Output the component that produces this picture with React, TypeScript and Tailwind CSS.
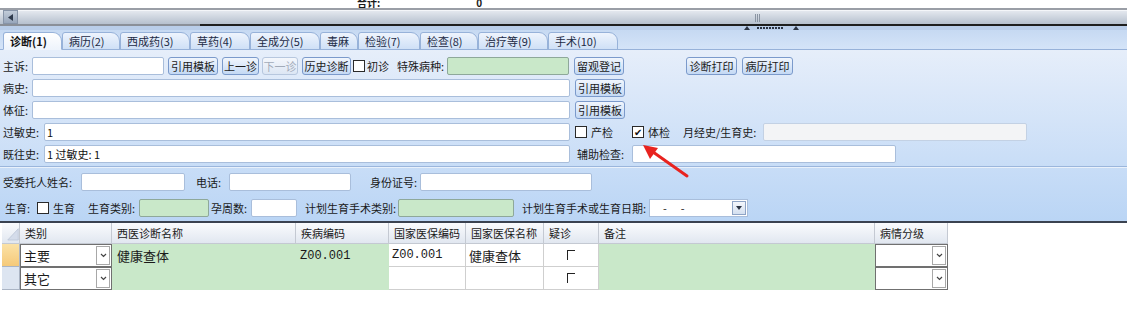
import React from 'react';

const font = "font-['Noto_Sans_CJK_SC','Noto_Sans',sans-serif]";

const Btn = ({ className = '', disabled = false, children }: { className?: string; disabled?: boolean; children: React.ReactNode }) => (
  <div
    className={`h-[18px] shrink-0 flex items-center justify-center rounded-[3px] border text-[11px] leading-none bg-linear-to-b ${
      disabled ? 'border-[#b7c7de] from-[#f4f7fc] to-[#dce6f4] text-[#a2abb9]' : 'border-[#7b9acb] from-[#f1f6fd] to-[#c4d9f4] text-[#1b1b1b]'
    } ${className}`}
  >
    {children}
  </div>
);

const Field = ({ className = '', tone = 'white', children }: { className?: string; tone?: 'white' | 'green' | 'gray'; children?: React.ReactNode }) => {
  const tones = {
    white: 'bg-white border-[#a9bedb]',
    green: 'bg-[#c9e8c9] border-[#8ea89a]',
    gray: 'bg-[#f3f4f6] border-[#c3d1e4]',
  };
  return (
    <div className={`h-[18px] shrink-0 flex items-center border rounded-[2px] pl-[2px] text-[11px] leading-none text-[#111] ${tones[tone]} ${className}`}>
      {children}
    </div>
  );
};

const Label = ({ className = '', children }: { className?: string; children: React.ReactNode }) => (
  <span className={`shrink-0 whitespace-nowrap text-[11px] leading-none text-[#1a1a1a] ${className}`}>{children}</span>
);

const Check = ({ className = '', checked = false }: { className?: string; checked?: boolean }) => (
  <div className={`w-[12px] h-[12px] shrink-0 bg-white border border-[#2a2a2a] flex items-center justify-center text-[10px] leading-none text-[#111] ${className}`}>
    {checked ? '✔' : ''}
  </div>
);

const Combo = ({ className = '', text = '' }: { className?: string; text?: string }) => (
  <div className={`h-full flex bg-white border border-[#707070] ${className}`}>
    <div className="flex-1 flex items-center pl-[3px] text-[13px] leading-none">{text}</div>
    <div className="w-[14px] m-[1px] border border-[#a8a8a8] flex items-center justify-center">
      <svg width="7" height="5" viewBox="0 0 7 5">
        <path d="M1 1 L3.5 3.5 L6 1" fill="none" stroke="#444" strokeWidth="1.2" />
      </svg>
    </div>
  </div>
);

const tabs = [
  { t: '诊断(1)', w: 'w-[59px]' },
  { t: '病历(2)', w: 'w-[58px]' },
  { t: '西成药(3)', w: 'w-[70px]' },
  { t: '草药(4)', w: 'w-[60px]' },
  { t: '全成分(5)', w: 'w-[70px]' },
  { t: '毒麻', w: 'w-[38px]' },
  { t: '检验(7)', w: 'w-[62px]' },
  { t: '检查(8)', w: 'w-[58px]' },
  { t: '治疗等(9)', w: 'w-[70px]' },
  { t: '手术(10)', w: 'w-[70px]' },
];

const HeadCell = ({ className = '', children }: { className?: string; children?: React.ReactNode }) => (
  <div className={`h-[21px] shrink-0 flex items-center pl-[5px] border-r border-b border-[#c4c9d2] text-[11px] leading-none text-[#1a1a1a] bg-linear-to-b from-[#fafbfd] to-[#e1e7f0] ${className}`}>
    {children}
  </div>
);

const GridRow = ({ main, current }: { main: boolean; current: boolean }) => (
  <div className="flex h-[23px]">
    <div className={`w-[18px] shrink-0 border-r border-b border-[#aab4c4] ${current ? 'bg-linear-to-b from-[#fbe2a6] to-[#f5c979]' : 'bg-[#dde5f1]'}`} />
    <div className="w-[92px] shrink-0">
      <Combo text={main ? '主要' : '其它'} />
    </div>
    <div className="w-[184px] shrink-0 bg-[#c9e8c9] flex items-center pl-[5px] text-[13px] leading-none">{main ? '健康查体' : ''}</div>
    <div className="w-[93px] shrink-0 bg-[#c9e8c9] flex items-center pl-[4px] text-[12px] leading-none font-['Liberation_Mono',monospace]">{main ? 'Z00.001' : ''}</div>
    <div className="w-[77px] shrink-0 bg-white border-r border-b border-[#cfcfcf] flex items-center pl-[3px] text-[12px] leading-none font-['Liberation_Mono',monospace]">{main ? 'Z00.001' : ''}</div>
    <div className="w-[78px] shrink-0 bg-white border-r border-b border-[#cfcfcf] flex items-center pl-[3px] text-[13px] leading-none">{main ? '健康查体' : ''}</div>
    <div className="w-[55px] shrink-0 bg-white border-r border-b border-[#cfcfcf] flex items-center pl-[23px]">
      <div className="w-[8px] h-[10px] border-t border-l border-[#222]" />
    </div>
    <div className="w-[276px] shrink-0 bg-[#c9e8c9]" />
    <div className="w-[73px] shrink-0">
      <Combo />
    </div>
  </div>
);

export default function App() {
  return (
    <div className={`relative w-[1127px] h-[334px] overflow-hidden bg-white text-[#1a1a1a] ${font}`}>
      {/* total line, partly scrolled out at the top */}
      <div className="h-[8px] overflow-hidden">
        <div className="-mt-[2px] flex text-[10px] leading-[10px] font-bold">
          <span className="ml-[357px]">合计:</span>
          <span className="ml-[96px]">0</span>
        </div>
      </div>
      <div className="h-[2px] bg-[#9a9ea6]" />
      {/* scrollbar */}
      <div className="h-[14px] flex bg-linear-to-b from-[#e7ebf1] to-[#b6c0ce]">
        <div className="ml-[3px] w-[15px] bg-linear-to-b from-[#c2ccd9] to-[#98a6bb] border border-[#8794a8] flex items-center justify-center">
          <svg width="5" height="7" viewBox="0 0 5 7">
            <path d="M5 0 L0 3.5 L5 7 Z" fill="#2e3a4c" />
          </svg>
        </div>
        <div className="flex-1 border-t border-[#f4f6f9] flex items-center">
          <div className="ml-[737px] flex gap-[1px]">
            <div className="w-[1px] h-[8px] bg-[#8a94a2]" />
            <div className="w-[1px] h-[8px] bg-[#8a94a2]" />
            <div className="w-[1px] h-[8px] bg-[#8a94a2]" />
          </div>
        </div>
      </div>
      <div className="h-[2px] flex">
        <div className="w-[200px] bg-[#8a8f98]" />
        <div className="flex-1 bg-[#1e1e1e]" />
      </div>
      {/* splitter */}
      <div className="h-[4px] bg-[#b9cde9] flex items-center">
        <svg className="ml-[744px]" width="6" height="4" viewBox="0 0 6 4">
          <path d="M0 4 L3 0 L6 4 Z" fill="#2b3444" />
        </svg>
        <div className="ml-[7px] flex gap-[1px]">
          {Array.from({ length: 9 }).map((_, i) => (
            <div key={i} className="w-[2px] h-[2px] bg-[#2b3444]" />
          ))}
        </div>
        <svg className="ml-[10px]" width="6" height="4" viewBox="0 0 6 4">
          <path d="M0 4 L3 0 L6 4 Z" fill="#2b3444" />
        </svg>
      </div>
      {/* tabs */}
      <div className="h-[20px] flex items-end pl-[3px] bg-linear-to-b from-[#c6d9f2] to-[#d4e4f8] border-b border-[#97b2d9]">
        {tabs.map((tab, i) => (
          <div
            key={tab.t}
            className={`shrink-0 ${tab.w} h-[18px] -mb-[1px] flex items-center pl-[6px] rounded-tl-[3px] rounded-tr-[9px] border border-[#97b2d9] text-[11px] leading-none whitespace-nowrap ${
              i === 0 ? 'bg-linear-to-b from-white to-[#eef4fc] border-b-[#eef4fc] font-bold text-[#111]' : 'bg-linear-to-b from-[#eef4fd] to-[#cfe0f6] text-[#1c2a44]'
            }`}
          >
            {tab.t}
          </div>
        ))}
      </div>
      {/* form panel */}
      <div className="h-[171px] pt-[7px] bg-linear-to-b from-[#e6eefa] to-[#bad5f5] flex flex-col">
        <div className="flex flex-col gap-[4px]">
          <div className="flex items-center h-[18px]">
            <Label className="w-[32px] pl-[3px]">主诉:</Label>
            <Field className="w-[132px]" />
            <Btn className="ml-[4px] w-[50px]">引用模板</Btn>
            <Btn className="ml-[4px] w-[37px]">上一诊</Btn>
            <Btn className="ml-[3px] w-[36px]" disabled>下一诊</Btn>
            <Btn className="ml-[4px] w-[49px]">历史诊断</Btn>
            <Check className="ml-[2px]" />
            <Label className="ml-[2px] w-[28px]">初诊</Label>
            <Label className="ml-[2px] w-[50px]">特殊病种:</Label>
            <Field className="w-[122px]" tone="green" />
            <Btn className="ml-[5px] w-[50px]">留观登记</Btn>
            <Btn className="ml-[62px] w-[51px]">诊断打印</Btn>
            <Btn className="ml-[5px] w-[51px]">病历打印</Btn>
          </div>
          <div className="flex items-center h-[18px]">
            <Label className="w-[32px] pl-[3px]">病史:</Label>
            <Field className="w-[538px]" />
            <Btn className="ml-[5px] w-[50px]">引用模板</Btn>
          </div>
          <div className="flex items-center h-[18px]">
            <Label className="w-[32px] pl-[3px]">体征:</Label>
            <Field className="w-[538px]" />
            <Btn className="ml-[5px] w-[50px]">引用模板</Btn>
          </div>
          <div className="flex items-center h-[18px]">
            <Label className="w-[44px] pl-[3px]">过敏史:</Label>
            <Field className="w-[526px]">1</Field>
            <Check className="ml-[5px]" />
            <Label className="ml-[4px] w-[41px]">产检</Label>
            <Check checked />
            <Label className="ml-[4px] w-[35px]">体检</Label>
            <Label className="w-[80px]">月经史/生育史:</Label>
            <Field className="w-[264px]" tone="gray" />
          </div>
          <div className="flex items-center h-[18px]">
            <Label className="w-[44px] pl-[3px]">既往史:</Label>
            <Field className="w-[526px]">1 过敏史: 1</Field>
            <Label className="ml-[7px] w-[55px]">辅助检查:</Label>
            <Field className="w-[264px]" />
          </div>
        </div>
        <div className="mt-[3px] h-[1px] bg-[#9bb6dc]" />
        <div className="h-[1px] bg-[#e9f1fb]" />
        <div className="mt-[5px] flex items-center h-[18px]">
          <Label className="w-[81px] pl-[3px]">受委托人姓名:</Label>
          <Field className="w-[104px]" />
          <Label className="ml-[11px] w-[33px]">电话:</Label>
          <Field className="w-[122px]" />
          <Label className="ml-[19px] w-[50px]">身份证号:</Label>
          <Field className="w-[172px]" />
        </div>
        <div className="mt-[8px] flex items-center h-[18px]">
          <Label className="w-[37px] pl-[5px]">生育:</Label>
          <Check />
          <Label className="ml-[4px] w-[35px]">生育</Label>
          <Label className="w-[51px]">生育类别:</Label>
          <Field className="w-[70px]" tone="green" />
          <Label className="ml-[2px] w-[40px]">孕周数:</Label>
          <Field className="w-[46px]" />
          <Label className="ml-[8px] w-[93px]">计划生育手术类别:</Label>
          <Field className="w-[116px]" tone="green" />
          <Label className="ml-[8px] w-[127px]">计划生育手术或生育日期:</Label>
          <div className="w-[99px] h-[18px] flex bg-white border border-[#a9bedb]">
            <div className="flex-1 flex items-center pl-[13px] gap-[14px] text-[11px] leading-none">
              <span>-</span>
              <span>-</span>
            </div>
            <div className="w-[14px] m-[1px] border border-[#8ea4c6] bg-linear-to-b from-[#f4f7fc] to-[#d4e0f0] flex items-center justify-center">
              <svg width="6" height="4" viewBox="0 0 6 4">
                <path d="M0 0 L6 0 L3 4 Z" fill="#2b3444" />
              </svg>
            </div>
          </div>
        </div>
      </div>
      <div className="h-[2px] bg-[#3a4250]" />
      {/* grid */}
      <div className="ml-[2px] flex flex-col w-[946px]">
        <div className="flex">
          <HeadCell className="w-[18px] pl-0 items-end justify-end">
            <svg width="16" height="18" viewBox="0 0 16 18">
              <path d="M15 2 L15 17 L1 17 Z" fill="#d4dcea" stroke="#b8c3d4" strokeWidth="1" />
            </svg>
          </HeadCell>
          <HeadCell className="w-[92px]">类别</HeadCell>
          <HeadCell className="w-[184px]">西医诊断名称</HeadCell>
          <HeadCell className="w-[93px]">疾病编码</HeadCell>
          <HeadCell className="w-[77px]">国家医保编码</HeadCell>
          <HeadCell className="w-[78px]">国家医保名称</HeadCell>
          <HeadCell className="w-[55px]">疑诊</HeadCell>
          <HeadCell className="w-[276px]">备注</HeadCell>
          <HeadCell className="w-[73px]">病情分级</HeadCell>
        </div>
        <GridRow main current />
        <GridRow main={false} current={false} />
      </div>
      {/* red arrow annotation */}
      <svg className="absolute left-0 top-0 pointer-events-none" width="1127" height="334">
        <line x1="687" y1="176" x2="653" y2="152" stroke="#e8231f" strokeWidth="3" strokeLinecap="round" />
        <path d="M643 145 L658 148 L650 159 Z" fill="#e8231f" />
      </svg>
    </div>
  );
}
